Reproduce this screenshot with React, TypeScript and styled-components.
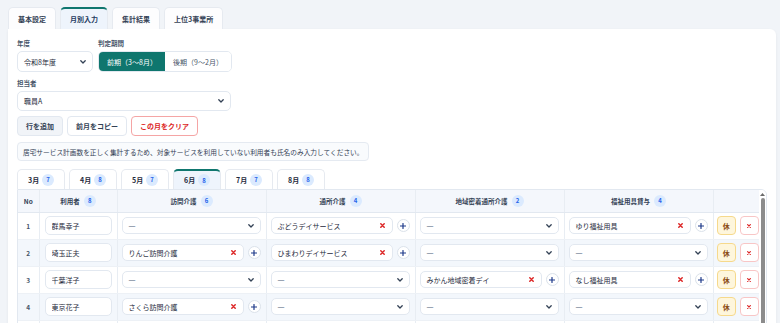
import React, { FC } from 'react';
import styled, { createGlobalStyle, css } from 'styled-components';

const GlobalStyle = createGlobalStyle`
  html, body {
    margin: 0;
    padding: 0;
    background: #f1f4f8;
    overflow: hidden;
  }
  body {
    font-family: "Noto Sans CJK JP", "Noto Sans", sans-serif;
    color: #1e293b;
  }
  * {
    box-sizing: border-box;
  }
`;

const Page = styled.div`
  padding: 7px 4px 0 8px;
`;

const TopTabs = styled.div`
  display: flex;
  gap: 4px;
`;

const TopTab = styled.div<{ $active?: boolean }>`
  height: 22px;
  padding: 0 9px;
  display: flex;
  align-items: center;
  font-size: 7px;
  font-weight: 700;
  color: #334155;
  background: #fdfdfe;
  border: 1px solid #e6eaf0;
  border-bottom: none;
  border-radius: 5px 5px 0 0;
  ${p => p.$active && css`
    background: #eef4fc;
    border-top: 2px solid #0f766e;
    color: #1e3a5f;
  `}
`;

const Card = styled.div`
  background: #fff;
  border-radius: 0 6px 0 0;
  box-shadow: 0 1px 3px rgba(15, 23, 42, 0.06);
  padding: 10px 9px 0 9px;
  min-height: 300px;
`;

const FieldRow = styled.div<{ $mb?: number }>`
  display: flex;
  gap: 5px;
  margin-bottom: ${p => p.$mb ?? 8}px;
`;

const Field = styled.div`
  display: flex;
  flex-direction: column;
  gap: 3px;
`;

const Label = styled.span`
  font-size: 6.5px;
  font-weight: 700;
  color: #475569;
  line-height: 9px;
`;

const SelectBox = styled.div<{ $width?: number; $height?: number; $muted?: boolean }>`
  width: ${p => (p.$width ? `${p.$width}px` : '100%')};
  height: ${p => p.$height || 20}px;
  display: flex;
  align-items: center;
  justify-content: space-between;
  border: 1px solid #e2e8f0;
  border-radius: 5px;
  background: #fff;
  padding: 0 6px;
  font-size: 7px;
  color: ${p => (p.$muted ? '#64748b' : '#1e293b')};
  cursor: pointer;
`;

const Dash = styled.span`
  font-family: "Noto Sans", sans-serif;
`;

const Segment = styled.div`
  display: flex;
  height: 21px;
  border: 1px solid #e2e8f0;
  border-radius: 5px;
  overflow: hidden;
`;

const SegmentButton = styled.button<{ $active?: boolean }>`
  width: 66px;
  border: none;
  font-family: inherit;
  font-size: 7px;
  background: ${p => (p.$active ? '#0f766e' : '#fff')};
  color: ${p => (p.$active ? '#fff' : '#475569')};
  padding: 0;
`;

const ButtonRow = styled.div`
  display: flex;
  gap: 4px;
  margin-bottom: 6px;
`;

const ActionButton = styled.button<{ $variant?: 'gray' | 'white' | 'danger' }>`
  height: 20px;
  padding: 0 8px;
  font-family: inherit;
  font-size: 7px;
  font-weight: 700;
  border-radius: 4px;
  border: 1px solid #e2e8f0;
  background: #fff;
  color: #334155;
  ${p => p.$variant === 'gray' && css`
    background: #f1f4f8;
  `}
  ${p => p.$variant === 'danger' && css`
    border-color: #f5a5a5;
    color: #dc2626;
  `}
`;

const Note = styled.div`
  width: fit-content;
  height: 19px;
  display: flex;
  align-items: center;
  padding: 0 5px;
  border: 1px solid #e5eaf1;
  border-radius: 4px;
  background: #f9fbfd;
  font-size: 6.7px;
  color: #334155;
  margin-bottom: 8px;
`;

const MonthTabs = styled.div`
  display: flex;
  gap: 4px;
`;

const MonthTab = styled.div<{ $active?: boolean }>`
  width: 48px;
  height: 20px;
  padding: 0 10px;
  display: flex;
  align-items: center;
  justify-content: space-between;
  font-size: 7px;
  font-weight: 700;
  color: #1e293b;
  background: #fff;
  border: 1px solid #e6eaf0;
  border-bottom: none;
  border-radius: 5px 5px 0 0;
  ${p => p.$active && css`
    background: #eef4fc;
    border-top: 2px solid #0f766e;
  `}
`;

const Badge = styled.span`
  display: inline-flex;
  align-items: center;
  justify-content: center;
  width: 12px;
  height: 12px;
  border-radius: 50%;
  background: #dbeafe;
  color: #2563eb;
  font-size: 6px;
  font-weight: 700;
`;

const TableFrame = styled.div`
  display: flex;
  height: 230px;
  border: 1px solid #e2e8f0;
  border-radius: 0 6px 0 0;
  overflow: hidden;
`;

const TableScroll = styled.div`
  flex: 1;
  overflow: hidden;
`;

const ScrollBar = styled.div`
  width: 7px;
  display: flex;
  flex-direction: column;
  align-items: center;
  background: #fff;
  padding-top: 3px;
  gap: 2px;
`;

const ScrollThumb = styled.div`
  width: 4px;
  flex: 1;
  border-radius: 2px;
  background: #8c8c8c;
`;

const Table = styled.table`
  width: 100%;
  border-collapse: collapse;
  table-layout: fixed;
`;

const Th = styled.th`
  height: 22px;
  background: #f4f7fc;
  font-size: 6.5px;
  font-weight: 700;
  color: #334155;
  border-bottom: 1px solid #e2e8f0;
  border-left: 1px solid #e8edf3;
  padding: 0;
  &:first-child {
    border-left: none;
  }
`;

const HeadInner = styled.div`
  display: flex;
  align-items: center;
  justify-content: center;
  gap: 4px;
`;

const Tr = styled.tr<{ $striped?: boolean }>`
  background: ${p => (p.$striped ? '#f3f7fc' : '#fff')};
`;

const Td = styled.td<{ $pad?: string }>`
  height: 27px;
  padding: ${p => p.$pad || '0 5px 0 4px'};
  border-left: 1px solid #e8edf3;
  border-bottom: 1px solid #edf1f6;
  vertical-align: middle;
  &:first-child {
    border-left: none;
  }
`;

const NoCell = styled.div`
  text-align: center;
  font-size: 6.5px;
  font-weight: 700;
  color: #475569;
`;

const NameInput = styled.input`
  display: block;
  width: 100%;
  height: 19px;
  border: 1px solid #e2e8f0;
  border-radius: 5px;
  padding: 0 6px;
  font-family: inherit;
  font-size: 7px;
  color: #1e293b;
  background: #fff;
  outline: none;
`;

const ValueLine = styled.div`
  display: flex;
  align-items: center;
  gap: 4px;
`;

const ValueBox = styled.div`
  flex: 1;
  height: 17px;
  display: flex;
  align-items: center;
  justify-content: space-between;
  border: 1px solid #e2e8f0;
  border-radius: 5px;
  background: #fff;
  padding: 0 7px 0 6px;
  font-size: 7px;
  color: #1e293b;
`;

const PlusButton = styled.button`
  width: 13px;
  height: 13px;
  border-radius: 50%;
  border: 1px solid #dbe2ea;
  background: #fff;
  padding: 0;
  display: flex;
  align-items: center;
  justify-content: center;
`;

const RowActions = styled.div`
  display: flex;
  gap: 4px;
`;

const RestButton = styled.button`
  width: 20px;
  height: 19px;
  border-radius: 4px;
  border: 1px solid #f6d98c;
  background: #fef6dc;
  color: #8a4a12;
  font-family: inherit;
  font-size: 7px;
  font-weight: 700;
  padding: 0;
`;

const DeleteButton = styled.button`
  width: 20px;
  height: 19px;
  border-radius: 4px;
  border: 1px solid #f8c6c6;
  background: #fff;
  padding: 0;
  display: flex;
  align-items: center;
  justify-content: center;
`;

const ChevronIcon: FC = () => (
  <svg width="6" height="4" viewBox="0 0 6 4">
    <path d="M0.8 0.8 L3 3 L5.2 0.8" fill="none" stroke="#334155" strokeWidth="1.3" strokeLinecap="round" strokeLinejoin="round" />
  </svg>
);

const CrossIcon: FC<{ size?: number }> = ({ size = 5 }) => (
  <svg width={size} height={size} viewBox="0 0 5 5">
    <path d="M0.8 0.8 L4.2 4.2 M4.2 0.8 L0.8 4.2" stroke="#dc2626" strokeWidth="1.5" strokeLinecap="round" />
  </svg>
);

const PlusIcon: FC = () => (
  <svg width="6" height="6" viewBox="0 0 6 6">
    <path d="M3 0.5 V5.5 M0.5 3 H5.5" stroke="#1e3a8a" strokeWidth="1.2" strokeLinecap="round" />
  </svg>
);

const ArrowUpIcon: FC = () => (
  <svg width="5" height="3" viewBox="0 0 5 3">
    <path d="M0 3 L2.5 0 L5 3 Z" fill="#6b6b6b" />
  </svg>
);

interface SelectFieldProps {
  value: string;
  width?: number;
  height?: number;
  muted?: boolean;
}

const SelectField: FC<SelectFieldProps> = ({ value, width, height, muted }) => (
  <SelectBox $width={width} $height={height} $muted={muted} role="combobox">
    {value === '—' ? <Dash>—</Dash> : <span>{value}</span>}
    <ChevronIcon />
  </SelectBox>
);

const ServiceCell: FC<{ value: string | null }> = ({ value }) => {
  if (!value) {
    return <SelectField value="—" height={17} muted />;
  }
  return (
    <ValueLine>
      <ValueBox>
        <span>{value}</span>
        <CrossIcon />
      </ValueBox>
      <PlusButton>
        <PlusIcon />
      </PlusButton>
    </ValueLine>
  );
};

interface Row {
  name: string;
  services: (string | null)[];
}

const rows: Row[] = [
  { name: '群馬幸子', services: [null, 'ぶどうデイサービス', null, 'ゆり福祉用具'] },
  { name: '埼玉正夫', services: ['りんご訪問介護', 'ひまわりデイサービス', null, null] },
  { name: '千葉洋子', services: [null, null, 'みかん地域密着デイ', 'なし福祉用具'] },
  { name: '東京花子', services: ['さくら訪問介護', null, null, null] },
  { name: '茨城一郎', services: ['りんご訪問介護', null, null, null] },
  { name: '栃木和子', services: [null, 'ぶどうデイサービス', null, 'ゆり福祉用具'] },
  { name: '山梨次郎', services: ['さくら訪問介護', null, 'みかん地域密着デイ', null] },
  { name: '静岡良子', services: ['りんご訪問介護', 'ひまわりデイサービス', null, 'なし福祉用具'] },
];

const serviceHeads = [
  { label: '訪問介護', count: 6 },
  { label: '通所介護', count: 4 },
  { label: '地域密着通所介護', count: 2 },
  { label: '福祉用具貸与', count: 4 },
];

const months = [
  { label: '3月', count: 7 },
  { label: '4月', count: 8 },
  { label: '5月', count: 7 },
  { label: '6月', count: 8, active: true },
  { label: '7月', count: 7 },
  { label: '8月', count: 8 },
];

const App: FC = () => {
  return (
    <Page>
      <GlobalStyle />
      <TopTabs>
        <TopTab>基本設定</TopTab>
        <TopTab $active>月別入力</TopTab>
        <TopTab>集計結果</TopTab>
        <TopTab>上位3事業所</TopTab>
      </TopTabs>
      <Card>
        <FieldRow $mb={7}>
          <Field>
            <Label>年度</Label>
            <SelectField value="令和8年度" width={76} height={21} />
          </Field>
          <Field>
            <Label>判定期間</Label>
            <Segment>
              <SegmentButton $active>前期（3〜8月）</SegmentButton>
              <SegmentButton>後期（9〜2月）</SegmentButton>
            </Segment>
          </Field>
        </FieldRow>
        <FieldRow $mb={5}>
          <Field>
            <Label>担当者</Label>
            <SelectField value="職員A" width={214} height={20} />
          </Field>
        </FieldRow>
        <ButtonRow>
          <ActionButton $variant="gray">行を追加</ActionButton>
          <ActionButton $variant="white">前月をコピー</ActionButton>
          <ActionButton $variant="danger">この月をクリア</ActionButton>
        </ButtonRow>
        <Note>居宅サービス計画数を正しく集計するため、対象サービスを利用していない利用者も氏名のみ入力してください。</Note>
        <MonthTabs>
          {months.map(m => (
            <MonthTab key={m.label} $active={m.active}>
              {m.label}
              <Badge>{m.count}</Badge>
            </MonthTab>
          ))}
        </MonthTabs>
        <TableFrame>
          <TableScroll>
            <Table>
              <colgroup>
                <col style={{ width: 21 }} />
                <col style={{ width: 78 }} />
                <col style={{ width: 149 }} />
                <col style={{ width: 149 }} />
                <col style={{ width: 149 }} />
                <col style={{ width: 149 }} />
                <col />
              </colgroup>
              <thead>
                <tr>
                  <Th>No</Th>
                  <Th>
                    <HeadInner>利用者<Badge>8</Badge></HeadInner>
                  </Th>
                  {serviceHeads.map(h => (
                    <Th key={h.label}>
                      <HeadInner>{h.label}<Badge>{h.count}</Badge></HeadInner>
                    </Th>
                  ))}
                  <Th />
                </tr>
              </thead>
              <tbody>
                {rows.map((r, i) => (
                  <Tr key={r.name} $striped={i % 2 === 1}>
                    <Td $pad="0">
                      <NoCell>{i + 1}</NoCell>
                    </Td>
                    <Td $pad="0 5px">
                      <NameInput defaultValue={r.name} />
                    </Td>
                    {r.services.map((s, j) => (
                      <Td key={j}>
                        <ServiceCell value={s} />
                      </Td>
                    ))}
                    <Td $pad="0 0 0 3px">
                      <RowActions>
                        <RestButton>休</RestButton>
                        <DeleteButton>
                          <CrossIcon size={4} />
                        </DeleteButton>
                      </RowActions>
                    </Td>
                  </Tr>
                ))}
              </tbody>
            </Table>
          </TableScroll>
          <ScrollBar>
            <ArrowUpIcon />
            <ScrollThumb />
          </ScrollBar>
        </TableFrame>
      </Card>
    </Page>
  );
};

export default App;
